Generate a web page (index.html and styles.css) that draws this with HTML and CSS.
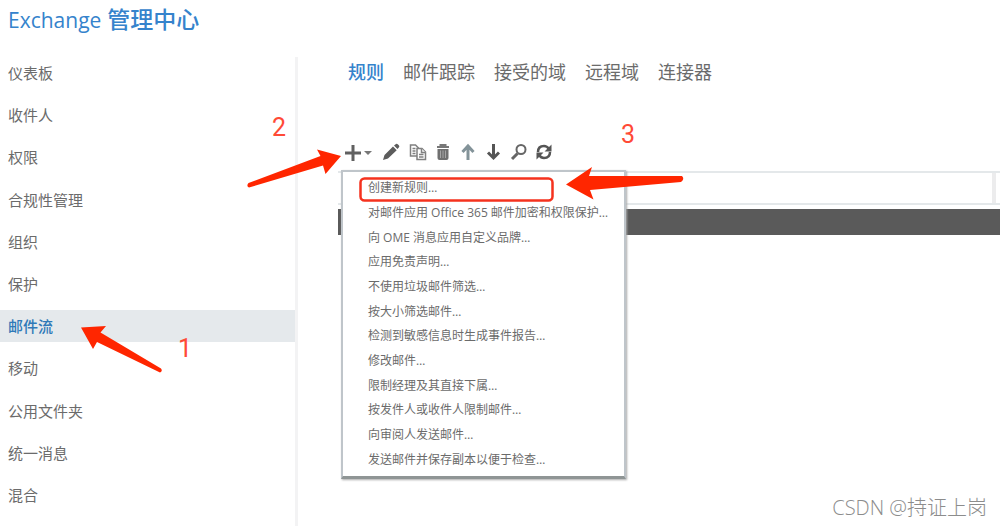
FILE: index.html
```html
<!DOCTYPE html>
<html lang="zh-CN">
<head>
<meta charset="utf-8">
<title>Exchange 管理中心</title>
<link rel="stylesheet" href="styles.css">
</head>
<body>
<div class="page">
  <header class="header"><h1 class="title"><span class="title-latin">Exchange</span> 管理中心</h1></header>
  <div class="shell">
    <nav class="nav" aria-label="功能">
      <a class="nav-item" href="#">仪表板</a>
      <a class="nav-item" href="#">收件人</a>
      <a class="nav-item" href="#">权限</a>
      <a class="nav-item" href="#">合规性管理</a>
      <a class="nav-item" href="#">组织</a>
      <a class="nav-item" href="#">保护</a>
      <a class="nav-item nav-item-active" href="#" aria-current="page">邮件流</a>
      <a class="nav-item" href="#">移动</a>
      <a class="nav-item" href="#">公用文件夹</a>
      <a class="nav-item" href="#">统一消息</a>
      <a class="nav-item" href="#">混合</a>
    </nav>
    <main class="main">
      <div class="tabs">
        <a class="tab tab-active" href="#">规则</a>
        <a class="tab" href="#">邮件跟踪</a>
        <a class="tab" href="#">接受的域</a>
        <a class="tab" href="#">远程域</a>
        <a class="tab" href="#">连接器</a>
      </div>
      <div class="toolbar">
        <button class="tool" aria-label="新建" aria-haspopup="menu"><svg width="29" height="18"><path d="M1 10h16M9 2v16" stroke="#606060" stroke-width="3"/><path d="M20 8h8l-4 4z" fill="#777"/></svg></button>
        <button class="tool" aria-label="编辑"><svg width="18" height="18"><path d="M1 17l1.500-5L11 3.500l3.700 3.700L6 15.500zM12 2.500l2-1.500q1-.5 2 .5l1 1q.8 1-.2 2l-1.300 1.500z" fill="#5c5c5c"/></svg></button>
        <button class="tool" aria-label="复制"><svg width="18" height="18" fill="#fff" stroke="#808080" stroke-width="1.500"><path d="M1.500 2h5l3 3v8h-8z"/><path d="M3.500 5.500h3M3.500 8h3M3.500 10.500h3"/><path d="M8 5.500h5l3.500 3.500v7.500H8z"/><path d="M12.500 5.500v4h4M10 11.500h4.500M10 14h4.500"/></svg></button>
        <button class="tool" aria-label="删除"><svg width="14" height="18"><path d="M1 4h12M4.500 3V2h5v1" fill="none" stroke="#777" stroke-width="2"/><path d="M1.500 6h11v9q0 2-2 2h-7q-2 0-2-2z" fill="#707070"/><path d="M4.500 7.500v7.500M7 7.500v7.500M9.500 7.500v7.500" stroke="#a5a5a5"/></svg></button>
        <button class="tool" aria-label="上移"><svg width="16" height="18" fill="none" stroke="#839399" stroke-width="3"><path d="M9 17V3M3.500 9L9 3l5.500 6"/></svg></button>
        <button class="tool" aria-label="下移"><svg width="16" height="18" fill="none" stroke="#555" stroke-width="3"><path d="M9.500 1v14M4 9.500L9.500 15l5.500-5.500"/></svg></button>
        <button class="tool" aria-label="搜索"><svg width="18" height="18" fill="none" stroke="#666"><circle cx="12" cy="6.500" r="4.500" stroke-width="2"/><path d="M8.500 10.500L3 16" stroke-width="3"/></svg></button>
        <button class="tool" aria-label="刷新"><svg width="16" height="18" fill="none" stroke="#555" stroke-width="2.500"><path d="M2 9q0-6 6-6 3 0 5 3M14 9q0 6-6 6-3 0-5-3"/><path d="M15.500 1.500v7h-7zM.5 16.500v-7h7z" fill="#555" stroke="none"/></svg></button>
      </div>
      <div class="list">
        <div class="list-head"><div class="list-col"></div></div>
        <div class="list-selected"></div>
        <div class="menu" role="menu">
          <button class="menu-item" role="menuitem">创建新规则…</button>
          <button class="menu-item" role="menuitem">对邮件应用 Office 365 邮件加密和权限保护…</button>
          <button class="menu-item" role="menuitem">向 OME 消息应用自定义品牌…</button>
          <button class="menu-item" role="menuitem">应用免责声明…</button>
          <button class="menu-item" role="menuitem">不使用垃圾邮件筛选…</button>
          <button class="menu-item" role="menuitem">按大小筛选邮件…</button>
          <button class="menu-item" role="menuitem">检测到敏感信息时生成事件报告…</button>
          <button class="menu-item" role="menuitem">修改邮件…</button>
          <button class="menu-item" role="menuitem">限制经理及其直接下属…</button>
          <button class="menu-item" role="menuitem">按发件人或收件人限制邮件…</button>
          <button class="menu-item" role="menuitem">向审阅人发送邮件…</button>
          <button class="menu-item" role="menuitem">发送邮件并保存副本以便于检查…</button>
        </div>
      </div>
    </main>
  </div>
  <svg class="notes" width="1000" height="526">
    <g fill="#ff2600">
      <path d="M81 327.500L106 326L100.500 332.500L161 368.500Q163 371 160 372.500L97 342L93 349z"/>
      <path d="M341 156L317 149.500L320.500 156L248.500 183Q246 186 249 187.500L323 165.500L325.500 174z"/>
      <path d="M566 184.500L592 167L589 176L682 176Q685 179 681 182L590 190L593.500 199.500z"/>
    </g>
    <rect x="360.500" y="178.500" width="192" height="22" rx="4" fill="none" stroke="#f5321e" stroke-width="2.500"/>
    <text class="note-label" x="178" y="357">1</text>
    <text class="note-label" x="272" y="136">2</text>
    <text class="note-label" x="621" y="143">3</text>
  </svg>
  <div class="watermark">CSDN @持证上岗</div>
</div>
</body>
</html>
```

FILE: styles.css
```css
* { box-sizing: border-box; }
body {
  margin: 0;
  background: #fff;
  color: #6b6b6b;
  font-family: "Open Sans", "Noto Sans CJK SC", sans-serif;
}
a { color: inherit; text-decoration: none; }
button {
  border: 0;
  padding: 0;
  background: none;
  color: inherit;
  font: inherit;
}
.page {
  position: relative;
  display: flex;
  flex-direction: column;
  min-height: 100vh;
  overflow: hidden;
}
.header { padding: 3px 8px 21px; }
.title {
  margin: 0;
  color: #3583cc;
  font-size: 23px;
  font-weight: 500;
  line-height: 32px;
}
.title-latin { font-size: 21px; }
.shell { display: flex; flex: 1; }
.nav {
  display: flex;
  flex-direction: column;
  justify-content: space-between;
  flex: 0 0 298px;
  padding-bottom: 15px;
  border-right: 3px solid #f3f3f4;
}
.nav-item {
  padding: 0 8px;
  font-size: 15px;
  line-height: 32px;
}
.nav-item-active { background: #e5e9ec; color: #2f79b8; font-weight: 500; }
.main { flex: 1; min-width: 0; padding-left: 40px; }
.tabs {
  display: flex;
  gap: 19px;
  padding-left: 10px;
  font-size: 18px;
  line-height: 30px;
}
.tab-active { color: #3583cc; font-weight: 500; }
.toolbar {
  display: flex;
  gap: 9px;
  padding: 56px 0 10px 6px;
}
.tool { display: flex; }
.list { position: relative; }
.list-head {
  display: flex;
  height: 34px;
  border: solid #e4e8ea;
  border-width: 2px 0;
}
.list-col { flex: 1; margin-right: 4px; border-right: 4px solid #ececed; }
.list-selected { height: 26px; margin-top: 4px; background: #5a5a5a; }
.menu {
  position: absolute;
  top: -1px;
  left: 3px;
  display: grid;
  grid-auto-rows: 1fr;
  width: 285px;
  height: 309px;
  padding: 3px 0 5px 25px;
  border: 2px solid #bfc5ca;
  border-bottom: 3px solid #8f9595;
  background: #fff;
  box-shadow: 1px 1px 2px #aaa;
  font-size: 12px;
}
.menu-item { text-align: left; white-space: nowrap; }
.notes { position: absolute; top: 0; left: 0; pointer-events: none; }
.note-label {
  fill: #ff4a36;
  font-family: Roboto, sans-serif;
  font-size: 25px;
}
.watermark {
  position: absolute;
  right: 13px;
  bottom: 4px;
  color: #8c8c8c;
  font-size: 20px;
  font-weight: 300;
  line-height: 28px;
}
```
